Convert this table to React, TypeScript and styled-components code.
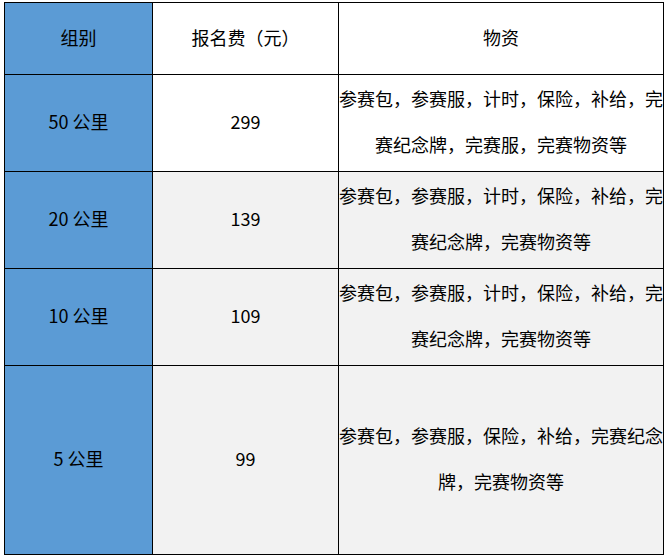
import React from "react";
import styled, { createGlobalStyle } from "styled-components";

const Global = createGlobalStyle`
  html, body { margin: 0; padding: 0; background: #ffffff; }
  body { font-family: "Noto Sans CJK SC", "Noto Sans", sans-serif; }
`;

const Page = styled.div`
  padding: 2px 0 0 4px;
`;

const Grid = styled.div`
  display: inline-grid;
  grid-template-columns: 147px 185px 324px;
  grid-template-rows: 71px 96px 96px 96px 188px;
  gap: 1px;
  padding: 1px;
  background: #000000;
`;

type Tone = "blue" | "white" | "grey";

const Cell = styled.div<{ $tone: Tone }>`
  display: flex;
  align-items: center;
  justify-content: center;
  text-align: center;
  box-sizing: border-box;
  padding-bottom: 4px;
  font-size: 18px;
  line-height: 46px;
  color: #000000;
  background: ${(p) =>
    p.$tone === "blue" ? "#5b9bd5" : p.$tone === "grey" ? "#f2f2f2" : "#ffffff"};
`;

const rows = [
  { group: "50 公里", fee: "299", items: "参赛包，参赛服，计时，保险，补给，完赛纪念牌，完赛服，完赛物资等", tone: "white" as Tone },
  { group: "20 公里", fee: "139", items: "参赛包，参赛服，计时，保险，补给，完赛纪念牌，完赛物资等", tone: "grey" as Tone },
  { group: "10 公里", fee: "109", items: "参赛包，参赛服，计时，保险，补给，完赛纪念牌，完赛物资等", tone: "grey" as Tone },
  { group: "5 公里", fee: "99", items: "参赛包，参赛服，保险，补给，完赛纪念牌，完赛物资等", tone: "grey" as Tone },
];

export default function App() {
  return (
    <>
      <Global />
      <Page>
        <Grid>
          <Cell $tone="blue">组别</Cell>
          <Cell $tone="white">报名费（元）</Cell>
          <Cell $tone="white">物资</Cell>
          {rows.map((r) => (
            <React.Fragment key={r.group}>
              <Cell $tone="blue">{r.group}</Cell>
              <Cell $tone={r.tone}>{r.fee}</Cell>
              <Cell $tone={r.tone}>{r.items}</Cell>
            </React.Fragment>
          ))}
        </Grid>
      </Page>
    </>
  );
}
